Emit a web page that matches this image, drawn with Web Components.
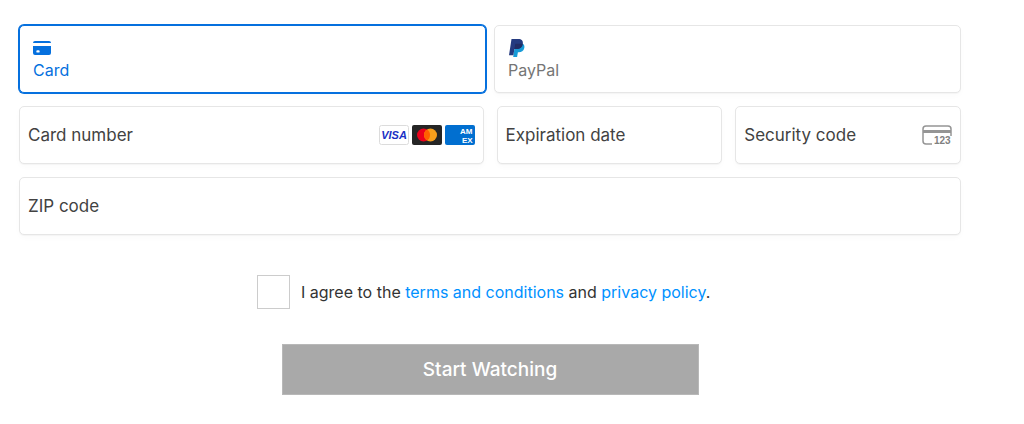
<!DOCTYPE html>
<html lang="en">
<head>
<meta charset="utf-8">
<title>Payment</title>
<style>
    body {
        margin: 0;
        background: #fff;
        color: #333;
        font-family: Inter, 'Liberation Sans', sans-serif;
        font-size: 16px;
        line-height: 20px;
    }
</style>
</head>
<body>
<payment-form></payment-form>

<template id="payment-tab">
    <style>
        :host {
            display: block;
        }

        button {
            box-sizing: border-box;
            width: 100%;
            height: 68px;
            padding: 0 13px;
            display: flex;
            flex-direction: column;
            justify-content: center;
            align-items: flex-start;
            gap: 3px;
            border: 1px solid #e6e6e6;
            border-radius: 5px;
            background: #fff;
            box-shadow: 0 1px 1px rgba(0, 0, 0, .03), 0 3px 6px rgba(0, 0, 0, .02);
            color: #757575;
            font: inherit;
            cursor: pointer;
        }

        :host([selected]) button {
            border-color: #0570de;
            color: #0570de;
            box-shadow: 0 0 0 1px #0570de, 0 3px 6px rgba(0, 0, 0, .02);
        }

        ::slotted(svg) {
            display: block;
        }
    </style>
    <button type="button" role="tab">
        <slot name="icon"></slot>
        <span><slot></slot></span>
    </button>
</template>

<template id="text-field">
    <style>
        :host {
            display: block;
            min-width: 0;
        }

        label {
            box-sizing: border-box;
            height: 58px;
            padding: 0 8px;
            display: flex;
            align-items: center;
            border: 1px solid #e6e6e6;
            border-radius: 5px;
            background: #fff;
            box-shadow: 0 1px 1px rgba(0, 0, 0, .03), 0 3px 6px rgba(0, 0, 0, .02);
            color: #424242;
            font-size: 17px;
            white-space: nowrap;
        }

        input {
            flex: 1;
            min-width: 0;
            padding: 0 8px;
            border: 0;
            outline: 0;
            background: none;
            font: inherit;
        }
    </style>
    <label>
        <span><slot></slot></span>
        <input type="text" autocomplete="off">
        <slot name="icon"></slot>
    </label>
</template>

<template id="card-brands">
    <style>
        :host {
            display: flex;
            gap: 3px;
        }

        svg {
            display: block;
        }

        text {
            font-family: 'Liberation Sans', sans-serif;
            font-weight: bold;
        }
    </style>
    <svg width="30" height="20" viewBox="0 0 30 20">
        <rect x=".5" y=".5" width="29" height="19" rx="2" fill="#fff" stroke="#dcdcdc"/>
        <text x="15" y="14" font-size="11" font-style="italic" text-anchor="middle" fill="#1a2fc4">VISA</text>
    </svg>
    <svg width="30" height="20" viewBox="0 0 30 20">
        <rect width="30" height="20" rx="2" fill="#252525"/>
        <circle cx="11.5" cy="10" r="6.5" fill="#eb001b"/>
        <circle cx="18.5" cy="10" r="6.5" fill="#f79e1b"/>
        <path d="M15 4.5a6.500 6.500 0 0 1 0 11a6.500 6.500 0 0 1 0-11z" fill="#ff5f00"/>
    </svg>
    <svg width="30" height="20" viewBox="0 0 30 20">
        <rect width="30" height="20" rx="2" fill="#016fd0"/>
        <text x="15" y="9" font-size="8" fill="#fff">AM</text>
        <text x="17" y="18" font-size="8" fill="#fff">EX</text>
    </svg>
</template>

<template id="agree-check">
    <style>
        :host {
            display: flex;
            justify-content: center;
        }

        .row {
            display: flex;
            align-items: center;
            gap: 11px;
            width: 100%;
            max-width: 466px;
        }

        input {
            appearance: none;
            box-sizing: border-box;
            flex: none;
            width: 33px;
            height: 34px;
            margin: 0;
            border: 1px solid #ccc;
            background: #fff;
        }

        input:checked {
            background: #0091ff;
        }
    </style>
    <div class="row">
        <input type="checkbox" id="agree">
        <label for="agree"><slot></slot></label>
    </div>
</template>

<template id="submit-button">
    <style>
        :host {
            display: flex;
            justify-content: center;
        }

        button {
            width: 100%;
            max-width: 417px;
            height: 51px;
            border: 1px solid #b8b8b8;
            background: #a9a9a9;
            color: #fff;
            font: inherit;
            font-size: 19px;
            font-weight: 500;
        }
    </style>
    <button type="submit"><slot></slot></button>
</template>

<template id="payment-form">
    <style>
        :host {
            display: block;
            padding: 25px 63px 24px 19px;
        }

        .tabs {
            display: grid;
            grid-template-columns: 1fr 1fr;
            gap: 8px;
            margin-bottom: 13px;
        }

        .fields {
            display: grid;
            grid-template-columns: repeat(4, 1fr);
            gap: 13px;
        }

        .half {
            grid-column: span 2;
        }

        .full {
            grid-column: 1 / -1;
        }

        agree-check {
            margin: 40px 0 35px;
        }

        a {
            color: #0091ff;
            text-decoration: none;
        }
    </style>
    <form>
        <div class="tabs" role="tablist">
            <payment-tab selected>
                <!-- bank card -->
                <svg slot="icon" width="18" height="18" viewBox="0 0 18 18" fill="#0570de">
                    <path d="M0 4a2 2 0 0 1 2-2h14a2 2 0 0 1 2 2z"/>
                    <path fill-rule="evenodd" d="M0 7h18v7a2 2 0 0 1-2 2H2a2 2 0 0 1-2-2zM4.500 11.200a1.200 1.200 0 0 0 0 2.400h1a1.200 1.200 0 0 0 0-2.400z"/>
                </svg>
                Card
            </payment-tab>
            <payment-tab>
                <!-- PayPal mark -->
                <svg slot="icon" width="18" height="18" viewBox="0 0 18 18">
                    <path d="M14.800 4.800c1.500.9 1.900 2.400 1.500 4.200-.7 3-2.800 4.200-5.500 4.200h-.9l-.8 4.800H5.200L7 6z" fill="#179bd7"/>
                    <path d="M3.500 0h6.800c3.300 0 5.100 1.700 4.500 5-.6 3.400-2.900 5-6 5H6.400l-1 6.200H1z" fill="#253b80"/>
                    <path d="M7.300 4.800h7.500c-.5 3.500-2.800 5.200-6 5.200H6.400z" fill="#222d65"/>
                </svg>
                PayPal
            </payment-tab>
        </div>
        <div class="fields">
            <text-field class="half">Card number<card-brands slot="icon"></card-brands></text-field>
            <text-field>Expiration date</text-field>
            <text-field>Security code
                <svg slot="icon" width="30" height="24" viewBox="0 0 30 24">
                    <path d="M10 21H4a3 3 0 0 1-3-3V6a3 3 0 0 1 3-3h22a3 3 0 0 1 3 3v7" fill="none" stroke="#959595" stroke-width="1.500"/>
                    <path d="M1 7h28v3H1z" fill="#959595"/>
                    <text x="12" y="21" font-family="Liberation Sans, sans-serif" font-size="10" font-weight="bold" fill="#808080">123</text>
                </svg>
            </text-field>
            <text-field class="full">ZIP code</text-field>
        </div>
        <agree-check>I agree to the <a href="#terms">terms and conditions</a> and <a href="#privacy">privacy policy</a>.</agree-check>
        <submit-button>Start Watching</submit-button>
    </form>
</template>

<script>
class BaseElement extends HTMLElement {
    constructor() {
        super()

        const template = document.getElementById(this.localName)
        this.attachShadow({ mode: 'open' })
        this.shadowRoot.appendChild(template.content.cloneNode(true))
    }
}

class PaymentTab extends BaseElement {
    connectedCallback() {
        this.shadowRoot.querySelector('button').setAttribute('aria-selected', this.hasAttribute('selected'))
    }
}

class TextField extends BaseElement {}
class CardBrands extends BaseElement {}
class AgreeCheck extends BaseElement {}
class SubmitButton extends BaseElement {}
class PaymentForm extends BaseElement {}

window.customElements.define('payment-tab', PaymentTab)
window.customElements.define('card-brands', CardBrands)
window.customElements.define('text-field', TextField)
window.customElements.define('agree-check', AgreeCheck)
window.customElements.define('submit-button', SubmitButton)
window.customElements.define('payment-form', PaymentForm)
</script>
</body>
</html>
